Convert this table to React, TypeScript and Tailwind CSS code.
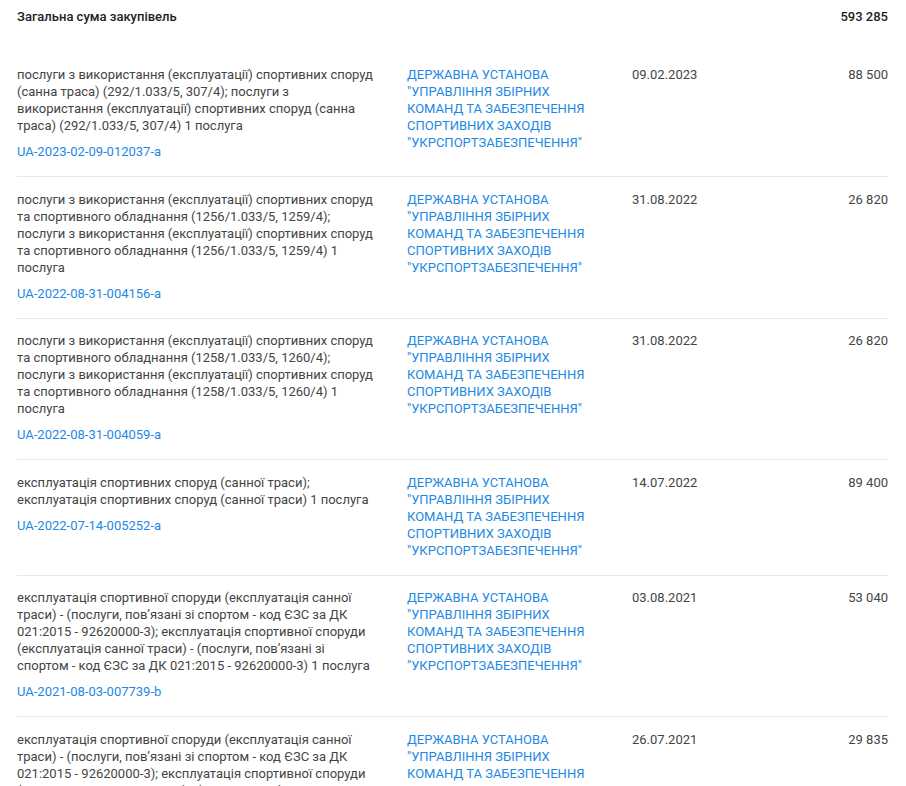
const ORG = 'ДЕРЖАВНА УСТАНОВА "УПРАВЛІННЯ ЗБІРНИХ КОМАНД ТА ЗАБЕЗПЕЧЕННЯ СПОРТИВНИХ ЗАХОДІВ "УКРСПОРТЗАБЕЗПЕЧЕННЯ"';

const SLED = [
  "експлуатація спортивної споруди (експлуатація санної",
  "траси) - (послуги, пов’язані зі спортом - код ЄЗС за ДК",
  "021:2015 - 92620000-3); експлуатація спортивної споруди",
  "(експлуатація санної траси) - (послуги, пов’язані зі",
  "спортом - код ЄЗС за ДК 021:2015 - 92620000-3) 1 послуга",
];

// Title lines are kept as the source page wraps them.
const ROWS = [
  {
    lines: [
      "послуги з використання (експлуатації) спортивних споруд",
      "(санна траса) (292/1.033/5, 307/4); послуги з",
      "використання (експлуатації) спортивних споруд (санна",
      "траса) (292/1.033/5, 307/4) 1 послуга",
    ],
    id: "UA-2023-02-09-012037-a",
    date: "09.02.2023",
    amount: "88 500",
  },
  {
    lines: [
      "послуги з використання (експлуатації) спортивних споруд",
      "та спортивного обладнання (1256/1.033/5, 1259/4);",
      "послуги з використання (експлуатації) спортивних споруд",
      "та спортивного обладнання (1256/1.033/5, 1259/4) 1",
      "послуга",
    ],
    id: "UA-2022-08-31-004156-a",
    date: "31.08.2022",
    amount: "26 820",
  },
  {
    lines: [
      "послуги з використання (експлуатації) спортивних споруд",
      "та спортивного обладнання (1258/1.033/5, 1260/4);",
      "послуги з використання (експлуатації) спортивних споруд",
      "та спортивного обладнання (1258/1.033/5, 1260/4) 1",
      "послуга",
    ],
    id: "UA-2022-08-31-004059-a",
    date: "31.08.2022",
    amount: "26 820",
  },
  {
    lines: [
      "експлуатація спортивних споруд (санної траси);",
      "експлуатація спортивних споруд (санної траси) 1 послуга",
    ],
    id: "UA-2022-07-14-005252-a",
    date: "14.07.2022",
    amount: "89 400",
  },
  {
    lines: SLED,
    id: "UA-2021-08-03-007739-b",
    date: "03.08.2021",
    amount: "53 040",
  },
  {
    lines: SLED,
    id: "UA-2021-07-26-000000-a",
    date: "26.07.2021",
    amount: "29 835",
  },
];

export default function App() {
  return (
    <div className="h-[786px] overflow-hidden bg-white px-[17px] text-[13px] leading-[17px] text-[#444] [font-family:Roboto,'Noto_Sans',sans-serif]">
      {/* Total */}
      <div className="flex w-[871px] justify-between pb-[41px] pt-[8px] font-medium text-[#222]">
        <span>Загальна сума закупівель</span>
        <span>593 285</span>
      </div>

      {/* Purchases */}
      <div className="w-[871px]">
        {ROWS.map((row, i) => (
          <div
            key={i}
            className="grid grid-cols-[374px_192px_1fr_auto] gap-x-4 border-b border-[#e8e8e8] pb-4 pt-[13.5px] first:pt-0"
          >
            <div>
              {row.lines.map((line, j) => (
                <span key={j} className="block whitespace-nowrap">
                  {line}
                </span>
              ))}
              <a href="#" className="mt-[9px] block text-[#1e88e5]">
                {row.id}
              </a>
            </div>
            <a href="#" className="block text-[#1e88e5]">
              {ORG}
            </a>
            <div className="pl-[17px]">{row.date}</div>
            <div className="text-right">{row.amount}</div>
          </div>
        ))}
      </div>
    </div>
  );
}
